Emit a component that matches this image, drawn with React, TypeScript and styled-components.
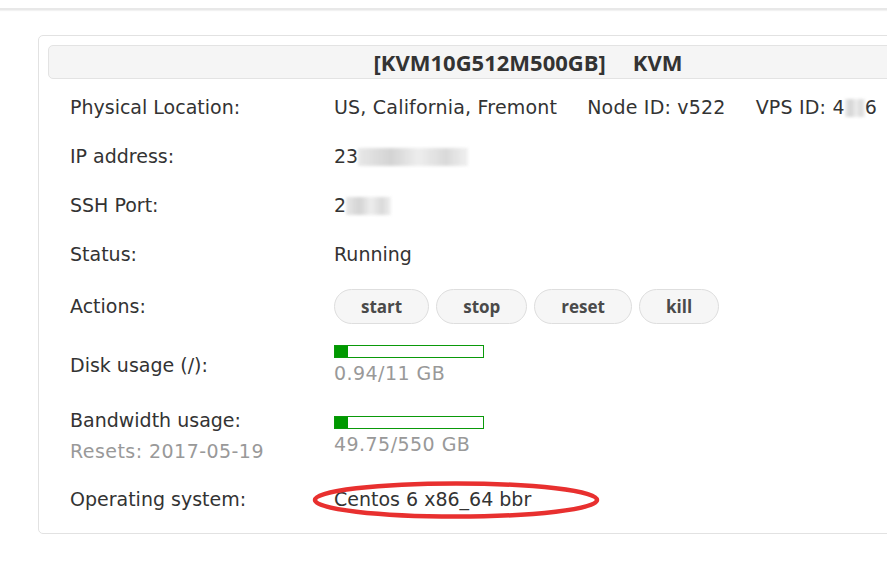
import React from "react";
import styled, { createGlobalStyle } from "styled-components";

const GlobalStyle = createGlobalStyle`
  html, body {
    margin: 0;
    padding: 0;
    background: #ffffff;
    overflow: hidden;
  }
  body {
    font-family: "DejaVu Sans", Verdana, sans-serif;
    color: #333;
  }
`;

const TopBar = styled.div`
  height: 8px;
  background: #fff;
  border-bottom: 2px solid #e8e8e8;
  box-shadow: 0 1px 1px #f2f2f2;
`;

const Card = styled.div`
  box-sizing: border-box;
  width: 980px;
  margin: 25px 0 0 38px;
  padding: 9px 9px 9px 9px;
  border: 1px solid #e2e2e2;
  border-radius: 5px;
  background: #fff;
`;

const Header = styled.div`
  box-sizing: border-box;
  height: 34px;
  display: flex;
  align-items: center;
  justify-content: center;
  gap: 27px;
  background: #f5f5f5;
  border: 1px solid #e3e3e3;
  border-radius: 5px;
  font-family: "Open Sans", sans-serif;
  font-stretch: 93%;
  font-weight: 700;
  font-size: 22px;
  color: #333;
`;

const Table = styled.div`
  display: grid;
  grid-template-columns: 264px 1fr;
  margin-top: 4px;
  padding-left: 22px;
`;

const Label = styled.div<{ $pad?: number }>`
  padding: ${(p) => p.$pad ?? 12}px 0;
  font-size: 19px;
  line-height: 25px;
  color: #333;
  display: flex;
  flex-direction: column;
  justify-content: center;
`;

const Value = styled.div<{ $pad?: number }>`
  position: relative;
  padding: ${(p) => p.$pad ?? 12}px 0;
  font-size: 19px;
  line-height: 25px;
  color: #333;
  display: flex;
  flex-direction: column;
  justify-content: center;
  align-items: flex-start;
  white-space: nowrap;
`;

const Inline = styled.div`
  display: flex;
  gap: 30px;
  letter-spacing: 0.2px;
`;

const Muted = styled.div<{ $gap?: number }>`
  color: #999;
  letter-spacing: 0.45px;
  margin-top: ${(p) => p.$gap ?? 0}px;
`;

const Blur = styled.span<{ $w: number }>`
  display: inline-block;
  width: ${(p) => p.$w}px;
  height: 18px;
  vertical-align: -3px;
  background: linear-gradient(90deg, #e6e6e6, #cfcfcf 30%, #ececec 55%, #d6d6d6 80%, #efefef);
  filter: blur(1.5px);
  opacity: 0.9;
`;

const Buttons = styled.div`
  display: flex;
  gap: 7px;
`;

const ActionButton = styled.button`
  box-sizing: border-box;
  height: 35px;
  padding: 0 26px;
  border: 1px solid #dedede;
  border-radius: 18px;
  background: #f6f6f6;
  font-family: "Open Sans", sans-serif;
  font-weight: 700;
  font-size: 17px;
  color: #4a4a4a;
  cursor: pointer;
`;

const Bar = styled.div`
  box-sizing: border-box;
  width: 150px;
  height: 13px;
  border: 1px solid #0a990a;
  background: #fff;
  margin-bottom: 3px;
`;

const BarFill = styled.div`
  height: 100%;
  background: #009900;
`;

const Ellipse = styled.svg`
  position: absolute;
  left: -23px;
  top: 5px;
  width: 290px;
  height: 40px;
  pointer-events: none;
  overflow: visible;
`;

const Usage: React.FC<{ used: number; total: number }> = ({ used, total }) => {
  const pct = Math.max(used / total, 0.09);
  return (
    <>
      <Bar>
        <BarFill style={{ width: `${pct * 100}%` }} />
      </Bar>
      <Muted>
        {used}/{total} GB
      </Muted>
    </>
  );
};

export default function App() {
  return (
    <>
      <GlobalStyle />
      <TopBar />
      <Card>
        <Header>
          <span>[KVM10G512M500GB]</span>
          <span>KVM</span>
        </Header>
        <Table>
          <Label>Physical Location:</Label>
          <Value>
            <Inline>
              <span>US, California, Fremont</span>
              <span>Node ID: v522</span>
              <span>
                VPS ID: 4<Blur $w={20} />6
              </span>
            </Inline>
          </Value>

          <Label>IP address:</Label>
          <Value>
            <span>
              23<Blur $w={110} />
            </span>
          </Value>

          <Label>SSH Port:</Label>
          <Value>
            <span>
              2<Blur $w={45} />
            </span>
          </Value>

          <Label>Status:</Label>
          <Value>Running</Value>

          <Label $pad={10}>Actions:</Label>
          <Value $pad={10}>
            <Buttons>
              <ActionButton>start</ActionButton>
              <ActionButton>stop</ActionButton>
              <ActionButton>reset</ActionButton>
              <ActionButton>kill</ActionButton>
            </Buttons>
          </Value>

          <Label $pad={11}>Disk usage (/):</Label>
          <Value $pad={11}>
            <Usage used={0.94} total={11} />
          </Value>

          <Label $pad={11}>
            <div>Bandwidth usage:</div>
            <Muted $gap={6}>Resets: 2017-05-19</Muted>
          </Label>
          <Value $pad={11}>
            <Usage used={49.75} total={550} />
          </Value>

          <Label>Operating system:</Label>
          <Value>
            <span>Centos 6 x86_64 bbr</span>
            <Ellipse viewBox="0 0 290 40">
              <ellipse
                cx="145"
                cy="20"
                rx="141"
                ry="16.5"
                fill="none"
                stroke="#e8302f"
                strokeWidth="4.5"
              />
            </Ellipse>
          </Value>
        </Table>
      </Card>
    </>
  );
}
